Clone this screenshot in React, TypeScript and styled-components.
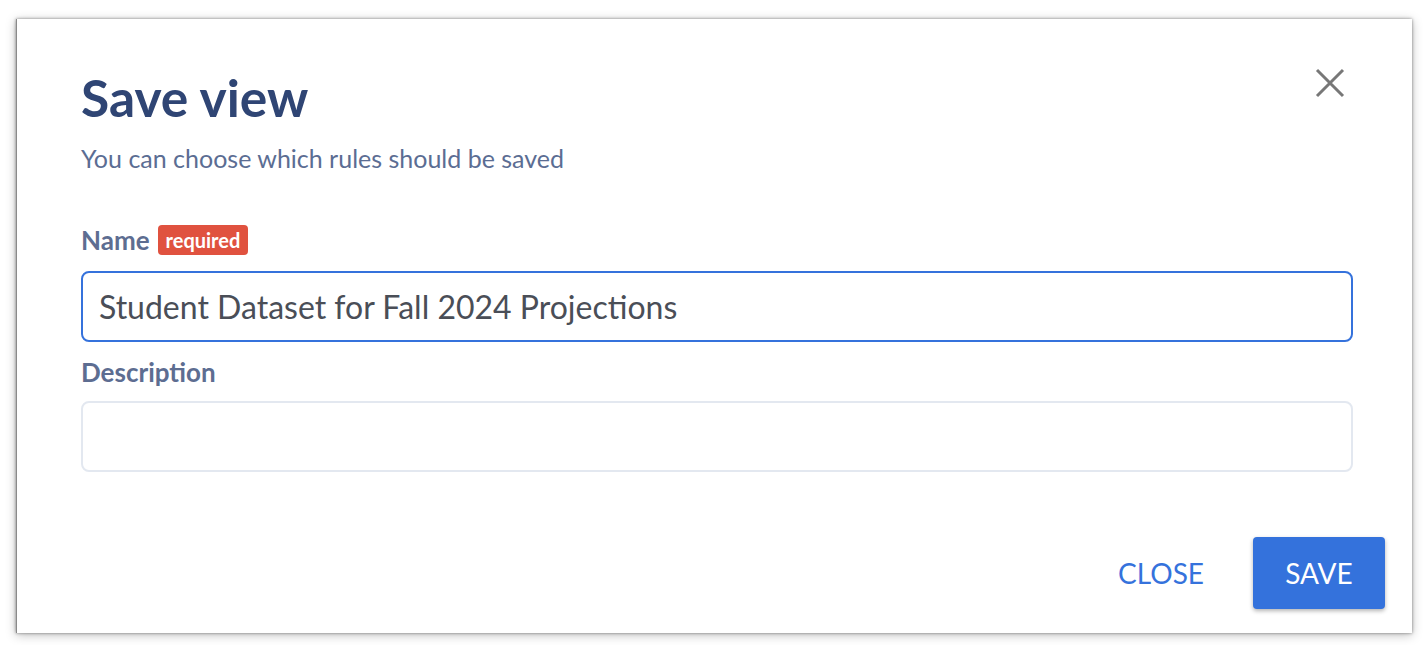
import React from "react";
import styled, { createGlobalStyle } from "styled-components";

const Global = createGlobalStyle`
  html, body { margin: 0; padding: 0; background: #ffffff; }
  body { font-family: Lato, "Noto Sans", sans-serif; }
  * { box-sizing: border-box; }
`;

const Page = styled.div`
  width: 1428px;
  height: 645px;
  padding: 19px 16px 0 16px;
  background: #ffffff;
`;

const Dialog = styled.div`
  width: 1396px;
  height: 614px;
  background: #ffffff;
  box-shadow: 0 0 3px rgba(0, 0, 0, 0.45), 0 2px 10px rgba(0, 0, 0, 0.25);
  border-left: 1px solid #8a8a8a;
  display: flex;
  flex-direction: column;
`;

const Body = styled.div`
  padding: 52px 59px 0 64px;
  display: flex;
  flex-direction: column;
  position: relative;
`;

const Title = styled.h1`
  margin: 0;
  font-size: 51.5px;
  line-height: 52px;
  font-weight: 700;
  color: #2f4574;
`;

const Subtitle = styled.p`
  margin: 23px 0 0 0;
  font-size: 25px;
  line-height: 25px;
  color: #5b6d93;
`;

const CloseIcon = styled.button`
  position: absolute;
  top: 48px;
  right: 66px;
  width: 32px;
  height: 32px;
  padding: 0;
  border: none;
  background: transparent;
  cursor: pointer;
  display: flex;
  align-items: center;
  justify-content: center;
`;

const LabelRow = styled.div<{ $top: number }>`
  margin-top: ${(p) => p.$top}px;
  display: flex;
  align-items: center;
  gap: 8px;
  height: 30px;
`;

const Label = styled.label`
  font-size: 26px;
  line-height: 26px;
  font-weight: 700;
  color: #5d6d91;
`;

const Badge = styled.span`
  background: #e0523f;
  color: #ffffff;
  font-size: 20px;
  font-weight: 700;
  line-height: 30px;
  height: 30px;
  padding: 0 8px;
  border-radius: 4px;
`;

const Input = styled.input<{ $focused?: boolean; $gap: number }>`
  margin-top: ${(p) => p.$gap}px;
  width: 100%;
  height: 71px;
  border: 2px solid ${(p) => (p.$focused ? "#3572dc" : "#e3e8f0")};
  border-radius: 8px;
  padding: 0 16px;
  font-family: Lato, "Noto Sans", sans-serif;
  font-size: 32px;
  color: #4a4e57;
  outline: none;
  background: #ffffff;
`;

const Footer = styled.div`
  margin-top: auto;
  padding: 0 27px 24px 0;
  display: flex;
  justify-content: flex-end;
  align-items: center;
  gap: 22px;
`;

const TextButton = styled.button`
  height: 72px;
  padding: 0 27px;
  border: none;
  background: transparent;
  color: #3572dc;
  font-family: Lato, "Noto Sans", sans-serif;
  font-size: 28px;
  font-weight: 400;
  text-transform: uppercase;
  cursor: pointer;
`;

const PrimaryButton = styled.button`
  width: 132px;
  height: 72px;
  border: none;
  border-radius: 4px;
  background: #3472dc;
  color: #ffffff;
  font-family: Lato, "Noto Sans", sans-serif;
  font-size: 28px;
  font-weight: 400;
  text-transform: uppercase;
  box-shadow: 0 2px 4px rgba(0, 0, 0, 0.3);
  cursor: pointer;
`;

export default function App() {
  return (
    <>
      <Global />
      <Page>
        <Dialog>
          <Body>
            <Title>Save view</Title>
            <Subtitle>You can choose which rules should be saved</Subtitle>
            <CloseIcon aria-label="Close">
              <svg width="30" height="30" viewBox="0 0 30 30">
                <path d="M2 2 L28 28 M28 2 L2 28" stroke="#777777" strokeWidth="3" strokeLinecap="butt" />
              </svg>
            </CloseIcon>
            <LabelRow $top={54}>
              <Label>Name</Label>
              <Badge>required</Badge>
            </LabelRow>
            <Input $focused $gap={16} defaultValue="Student Dataset for Fall 2024 Projections" />
            <LabelRow $top={15}>
              <Label>Description</Label>
            </LabelRow>
            <Input $gap={14} defaultValue="" />
          </Body>
          <Footer>
            <TextButton>Close</TextButton>
            <PrimaryButton>Save</PrimaryButton>
          </Footer>
        </Dialog>
      </Page>
    </>
  );
}
